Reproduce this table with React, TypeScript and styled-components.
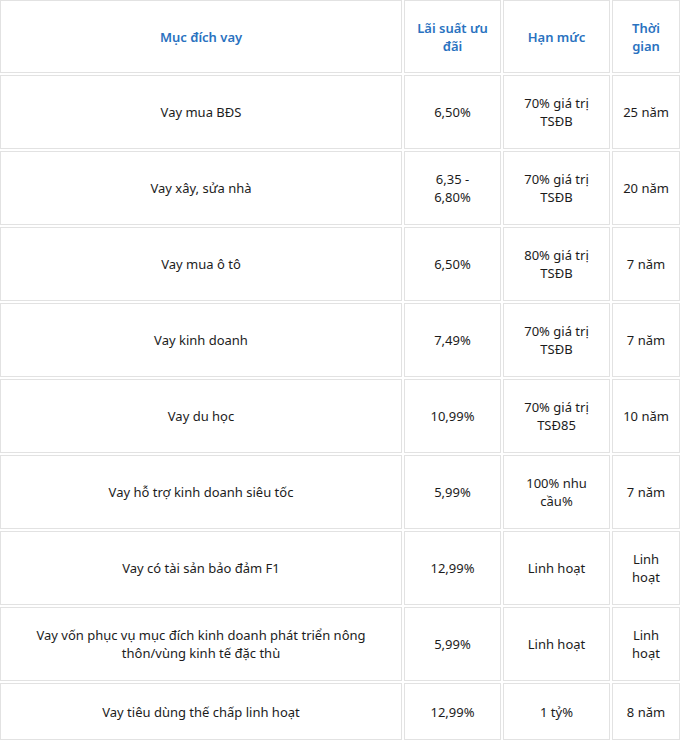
import * as React from 'react';
import styled, { createGlobalStyle } from 'styled-components';

const GlobalStyle = createGlobalStyle`
  body {
    margin: 0;
    background: #ffffff;
    font-family: 'Noto Sans', 'Liberation Sans', sans-serif;
  }
`;

const border = '#e2e2e2';

// line breaks follow the source table where the cell is narrow
const rows = [
  ['Vay mua BĐS', '6,50%', '70% giá trị TSĐB', '25 năm'],
  ['Vay xây, sửa nhà', '6,35 -\n6,80%', '70% giá trị TSĐB', '20 năm'],
  ['Vay mua ô tô', '6,50%', '80% giá trị TSĐB', '7 năm'],
  ['Vay kinh doanh', '7,49%', '70% giá trị TSĐB', '7 năm'],
  ['Vay du học', '10,99%', '70% giá trị TSĐ85', '10 năm'],
  ['Vay hỗ trợ kinh doanh siêu tốc', '5,99%', '100% nhu cầu%', '7 năm'],
  ['Vay có tài sản bảo đảm F1', '12,99%', 'Linh hoạt', 'Linh hoạt'],
  [
    'Vay vốn phục vụ mục đích kinh doanh phát triển nông thôn/vùng kinh tế đặc thù',
    '5,99%',
    'Linh hoạt',
    'Linh hoạt',
  ],
  ['Vay tiêu dùng thế chấp linh hoạt', '12,99%', '1 tỷ%', '8 năm'],
];

const headers = ['Mục đích vay', 'Lãi suất ưu đãi', 'Hạn mức', 'Thời gian'];

const Table = styled.div`
  display: grid;
  grid-template-columns: 402px 97px 107px 68px;
  grid-template-rows: 73px repeat(8, 74px) 57px;
  gap: 2px;
  width: 680px;
`;

const Cell = styled.div<{ $head?: boolean; $pad: number }>`
  display: flex;
  align-items: center;
  justify-content: center;
  text-align: center;
  white-space: pre-line;
  border: 1px solid ${border};
  padding: 0 ${(p) => p.$pad}px;
  font-size: 13px;
  line-height: 18px;
  font-weight: ${(p) => (p.$head ? 600 : 400)};
  color: ${(p) => (p.$head ? '#2a72c0' : '#1c1c1c')};
`;

const pads = [4, 9, 8, 5];

export default function App() {
  return (
    <>
      <GlobalStyle />
      <Table>
        {headers.map((h, i) => (
          <Cell key={h} $head $pad={pads[i]}>
            {h}
          </Cell>
        ))}
        {rows.map((row) =>
          row.map((text, i) => (
            <Cell key={row[0] + i} $pad={pads[i]}>
              {text}
            </Cell>
          ))
        )}
      </Table>
    </>
  );
}
